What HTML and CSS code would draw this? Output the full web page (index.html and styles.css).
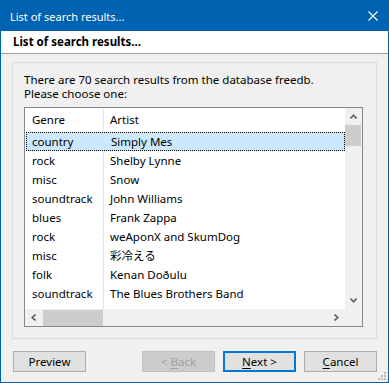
FILE: index.html
```html
<!DOCTYPE html>
<html lang="en">
<head>
    <meta charset="UTF-8">
    <title>List of search results...</title>
    <link rel="stylesheet" href="styles.css">
</head>
<body>
    <div class="window">
        <div class="titlebar">
            <span class="title">List of search results...</span>
            <svg class="close" width="10" height="10" viewBox="0 0 10 10">
                <path d="M0.5 0.5 L9.5 9.5 M9.5 0.5 L0.5 9.5" stroke="#fff" stroke-width="1.1" fill="none"/>
            </svg>
        </div>
        <div class="header">List of search results...</div>

        <div class="content">
            <div class="groupbox">
                <p class="intro">There are 70 search results from the database freedb.<br>Please choose one:</p>

                <div class="listview">
                    <div class="list-body">
                        <div class="row head">
                            <div class="cell genre">Genre</div>
                            <div class="cell">Artist</div>
                        </div>
                        <div class="row selected">
                            <div class="cell genre">country</div>
                            <div class="cell">Simply Mes</div>
                        </div>
                        <div class="row">
                            <div class="cell genre">rock</div>
                            <div class="cell">Shelby Lynne</div>
                        </div>
                        <div class="row">
                            <div class="cell genre">misc</div>
                            <div class="cell">Snow</div>
                        </div>
                        <div class="row">
                            <div class="cell genre">soundtrack</div>
                            <div class="cell">John Williams</div>
                        </div>
                        <div class="row">
                            <div class="cell genre">blues</div>
                            <div class="cell">Frank Zappa</div>
                        </div>
                        <div class="row">
                            <div class="cell genre">rock</div>
                            <div class="cell">weAponX and SkumDog</div>
                        </div>
                        <div class="row">
                            <div class="cell genre">misc</div>
                            <div class="cell">彩冷える</div>
                        </div>
                        <div class="row">
                            <div class="cell genre">folk</div>
                            <div class="cell">Kenan Doðulu</div>
                        </div>
                        <div class="row">
                            <div class="cell genre">soundtrack</div>
                            <div class="cell">The Blues Brothers Band</div>
                        </div>
                        <div class="row filler">
                            <div class="cell genre"></div>
                            <div class="cell"></div>
                        </div>
                    </div>

                    <!-- vertical scrollbar -->
                    <div class="vscroll">
                        <div class="arrow">
                            <svg width="7" height="5" viewBox="0 0 7 5"><path d="M0.5 4.5 L3.5 1.2 L6.5 4.5" stroke="#606060" stroke-width="1.6" fill="none"/></svg>
                        </div>
                        <div class="vthumb"></div>
                        <div class="track"></div>
                        <div class="arrow">
                            <svg width="7" height="5" viewBox="0 0 7 5"><path d="M0.5 0.5 L3.5 3.8 L6.5 0.5" stroke="#606060" stroke-width="1.6" fill="none"/></svg>
                        </div>
                    </div>

                    <!-- horizontal scrollbar -->
                    <div class="hscroll">
                        <div class="arrow">
                            <svg width="5" height="7" viewBox="0 0 5 7"><path d="M4.5 0.5 L1.2 3.5 L4.5 6.5" stroke="#606060" stroke-width="1.6" fill="none"/></svg>
                        </div>
                        <div class="hthumb"></div>
                        <div class="track"></div>
                        <div class="arrow">
                            <svg width="5" height="7" viewBox="0 0 5 7"><path d="M0.5 0.5 L3.8 3.5 L0.5 6.5" stroke="#606060" stroke-width="1.6" fill="none"/></svg>
                        </div>
                    </div>
                    <div class="corner"></div>
                </div>
            </div>

            <div class="buttons">
                <button class="btn">Preview</button>
                <button class="btn disabled back">&lt; <u>B</u>ack</button>
                <button class="btn default"><u>N</u>ext &gt;</button>
                <button class="btn"><u>C</u>ancel</button>
            </div>
        </div>

        <svg class="grip" width="8" height="8" viewBox="0 0 8 8">
            <rect x="6" y="0" width="2" height="2" fill="#b9b9b9"/>
            <rect x="3" y="3" width="2" height="2" fill="#b9b9b9"/>
            <rect x="6" y="3" width="2" height="2" fill="#b9b9b9"/>
            <rect x="0" y="6" width="2" height="2" fill="#b9b9b9"/>
            <rect x="3" y="6" width="2" height="2" fill="#b9b9b9"/>
            <rect x="6" y="6" width="2" height="2" fill="#b9b9b9"/>
        </svg>
    </div>
</body>
</html>
```

FILE: styles.css
```css
body {
    margin: 0;
    font-family: "Noto Sans", "Open Sans", "Noto Sans CJK JP", sans-serif;
    font-size: 11.5px;
    color: #000;
}

.window {
    position: relative;
    width: 389px;
    height: 383px;
    box-sizing: border-box;
    border: 1px solid #0063b1;
    background-color: #f0f0f0;
    display: flex;
    flex-direction: column;
}

.titlebar {
    height: 30px;
    flex-shrink: 0;
    background-color: #0063b1;
    color: #fff;
    display: flex;
    align-items: center;
    justify-content: space-between;
    padding: 0 10px 0 9px;
}

.title {
    font-size: 11px;
}

.close {
    margin-top: -1px;
}

.header {
    height: 22px;
    flex-shrink: 0;
    line-height: 22px;
    background-color: #fff;
    font-weight: bold;
    padding-left: 12px;
    border-bottom: 1px solid #a0a0a0;
}

.content {
    flex: 1;
    padding: 8px 11px 0 11px;
    display: flex;
    flex-direction: column;
}

.groupbox {
    height: 277px;
    flex-shrink: 0;
    box-sizing: border-box;
    border: 1px solid #dcdcdc;
    padding: 10px 13px 0 11px;
}

.intro {
    margin: 0 0 6px 0;
    line-height: 14px;
}

.listview {
    height: 220px;
    box-sizing: border-box;
    border: 1px solid #828790;
    background-color: #fff;
    display: grid;
    grid-template-columns: 1fr 17px;
    grid-template-rows: 1fr 17px;
}

.list-body {
    overflow: hidden;
}

.row {
    display: grid;
    grid-template-columns: 79px 1fr;
    height: 19px;
    line-height: 19px;
    white-space: nowrap;
}

.row.head {
    height: 24px;
    line-height: 23px;
}

.row.filler {
    height: 10px;
}

.cell {
    padding-left: 6px;
    overflow: hidden;
}

.cell.genre {
    padding-left: 7px;
    border-right: 1px solid #e5e5e5;
}

.row.selected {
    background-color: #cce8ff;
    outline: 1px dotted #000;
    outline-offset: -1px;
    margin: 0 0 0 1px;
}

.row.selected .genre {
    padding-left: 6px;
    border-right-color: #cce8ff;
}

.vscroll,
.hscroll,
.corner {
    background-color: #f0f0f0;
}

.vscroll {
    display: flex;
    flex-direction: column;
}

.hscroll {
    display: flex;
}

.arrow {
    width: 17px;
    height: 17px;
    display: flex;
    align-items: center;
    justify-content: center;
    flex-shrink: 0;
}

.track {
    flex: 1;
}

.vthumb {
    height: 21px;
    margin: 0 1px 0 0;
    background-color: #cdcdcd;
}

.hthumb {
    width: 60px;
    margin: 1px 0 0 1px;
    background-color: #cdcdcd;
}

.buttons {
    display: flex;
    gap: 8px;
    margin-top: 12px;
    padding-left: 1px;
}

.btn {
    width: 73px;
    height: 21px;
    box-sizing: border-box;
    border: 1px solid #adadad;
    background-color: #e1e1e1;
    font-family: inherit;
    font-size: 11.5px;
    color: #000;
    padding: 0;
}

.btn u {
    text-decoration-thickness: 1px;
    text-underline-offset: 2px;
}

.btn.back {
    margin-left: auto;
}

.btn.disabled {
    background-color: #cccccc;
    border-color: #bfbfbf;
    color: #a0a0a0;
}

.btn.default {
    border: 2px solid #0078d7;
}

.grip {
    position: absolute;
    right: 2px;
    bottom: 2px;
}
```
